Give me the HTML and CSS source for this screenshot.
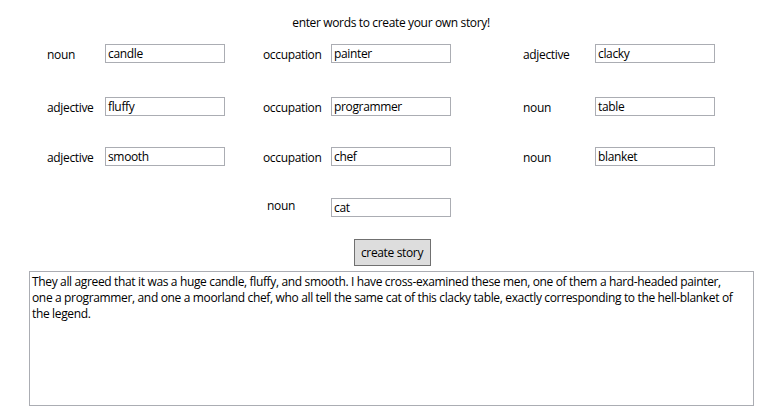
FILE: index.html
```html
<!DOCTYPE html>
<html>
<head>
<meta charset="utf-8">
<link rel="stylesheet" href="styles.css">
</head>
<body>
<div class="window">
  <div class="title">enter words to create your own story!</div>
  <div class="form">
    <div class="row r1">
      <span class="lbl l1">noun</span><span class="box">candle</span>
      <span class="lbl l2">occupation</span><span class="box">painter</span>
      <span class="lbl l3">adjective</span><span class="box">clacky</span>
    </div>
    <div class="row r2">
      <span class="lbl l1">adjective</span><span class="box">fluffy</span>
      <span class="lbl l2">occupation</span><span class="box">programmer</span>
      <span class="lbl l3">noun</span><span class="box">table</span>
    </div>
    <div class="row r3">
      <span class="lbl l1">adjective</span><span class="box">smooth</span>
      <span class="lbl l2">occupation</span><span class="box">chef</span>
      <span class="lbl l3">noun</span><span class="box">blanket</span>
    </div>
    <div class="row r4">
      <span class="lbl l4">noun</span><span class="box">cat</span>
    </div>
  </div>
  <div class="actions"><button class="btn">create story</button></div>
  <div class="story">They all agreed that it was a huge candle, fluffy, and smooth. I have cross-examined these men, one of them a hard-headed painter,<br>one a programmer, and one a moorland chef, who all tell the same cat of this clacky table, exactly corresponding to the hell-blanket of<br>the legend.</div>
</div>
</body>
</html>
```
FILE: styles.css
```css
* { box-sizing: border-box; }
html, body { margin: 0; padding: 0; background: #ffffff; }
body {
  width: 782px;
  height: 410px;
  overflow: hidden;
  font-family: "Open Sans", "Noto Sans", sans-serif;
  font-size: 12px;
  letter-spacing: -0.35px;
  color: #000;
}
.window { padding-top: 15px; }
.title {
  text-align: center;
  line-height: 16px;
  height: 16px;
}
.form { padding-left: 47px; }
.row {
  display: flex;
  align-items: center;
  height: 19px;
}
.r1 { margin-top: 13px; }
.r2 { margin-top: 34px; }
.r3 { margin-top: 31px; }
.r4 { margin-top: 32px; padding-left: 220px; }
.lbl { white-space: nowrap; line-height: 16px; position: relative; top: 1px; }
.l1 { width: 58px; }
.l2 { width: 68px; margin-left: 38px; }
.l3 { width: 72px; margin-left: 72px; }
.l4 { width: 64px; top: -2px; }
.box {
  width: 120px;
  height: 19px;
  border: 1px solid #abadb3;
  padding: 0 2px;
  line-height: 17px;
  white-space: nowrap;
  overflow: hidden;
}
.actions {
  display: flex;
  justify-content: center;
  margin-top: 22px;
  padding-left: 2px;
}
.btn {
  width: 77px;
  height: 27px;
  background: #dddddd;
  border: 1px solid #707070;
  border-radius: 0;
  font-family: inherit;
  font-size: 12px;
  letter-spacing: -0.35px;
  color: #000;
  padding: 0 0 1px 0;
}
.story {
  margin: 5px 0 0 29px;
  width: 725px;
  height: 135px;
  border: 1px solid #abadb3;
  padding: 2px 2px;
  line-height: 16px;
  white-space: nowrap;
  overflow: hidden;
}
```
